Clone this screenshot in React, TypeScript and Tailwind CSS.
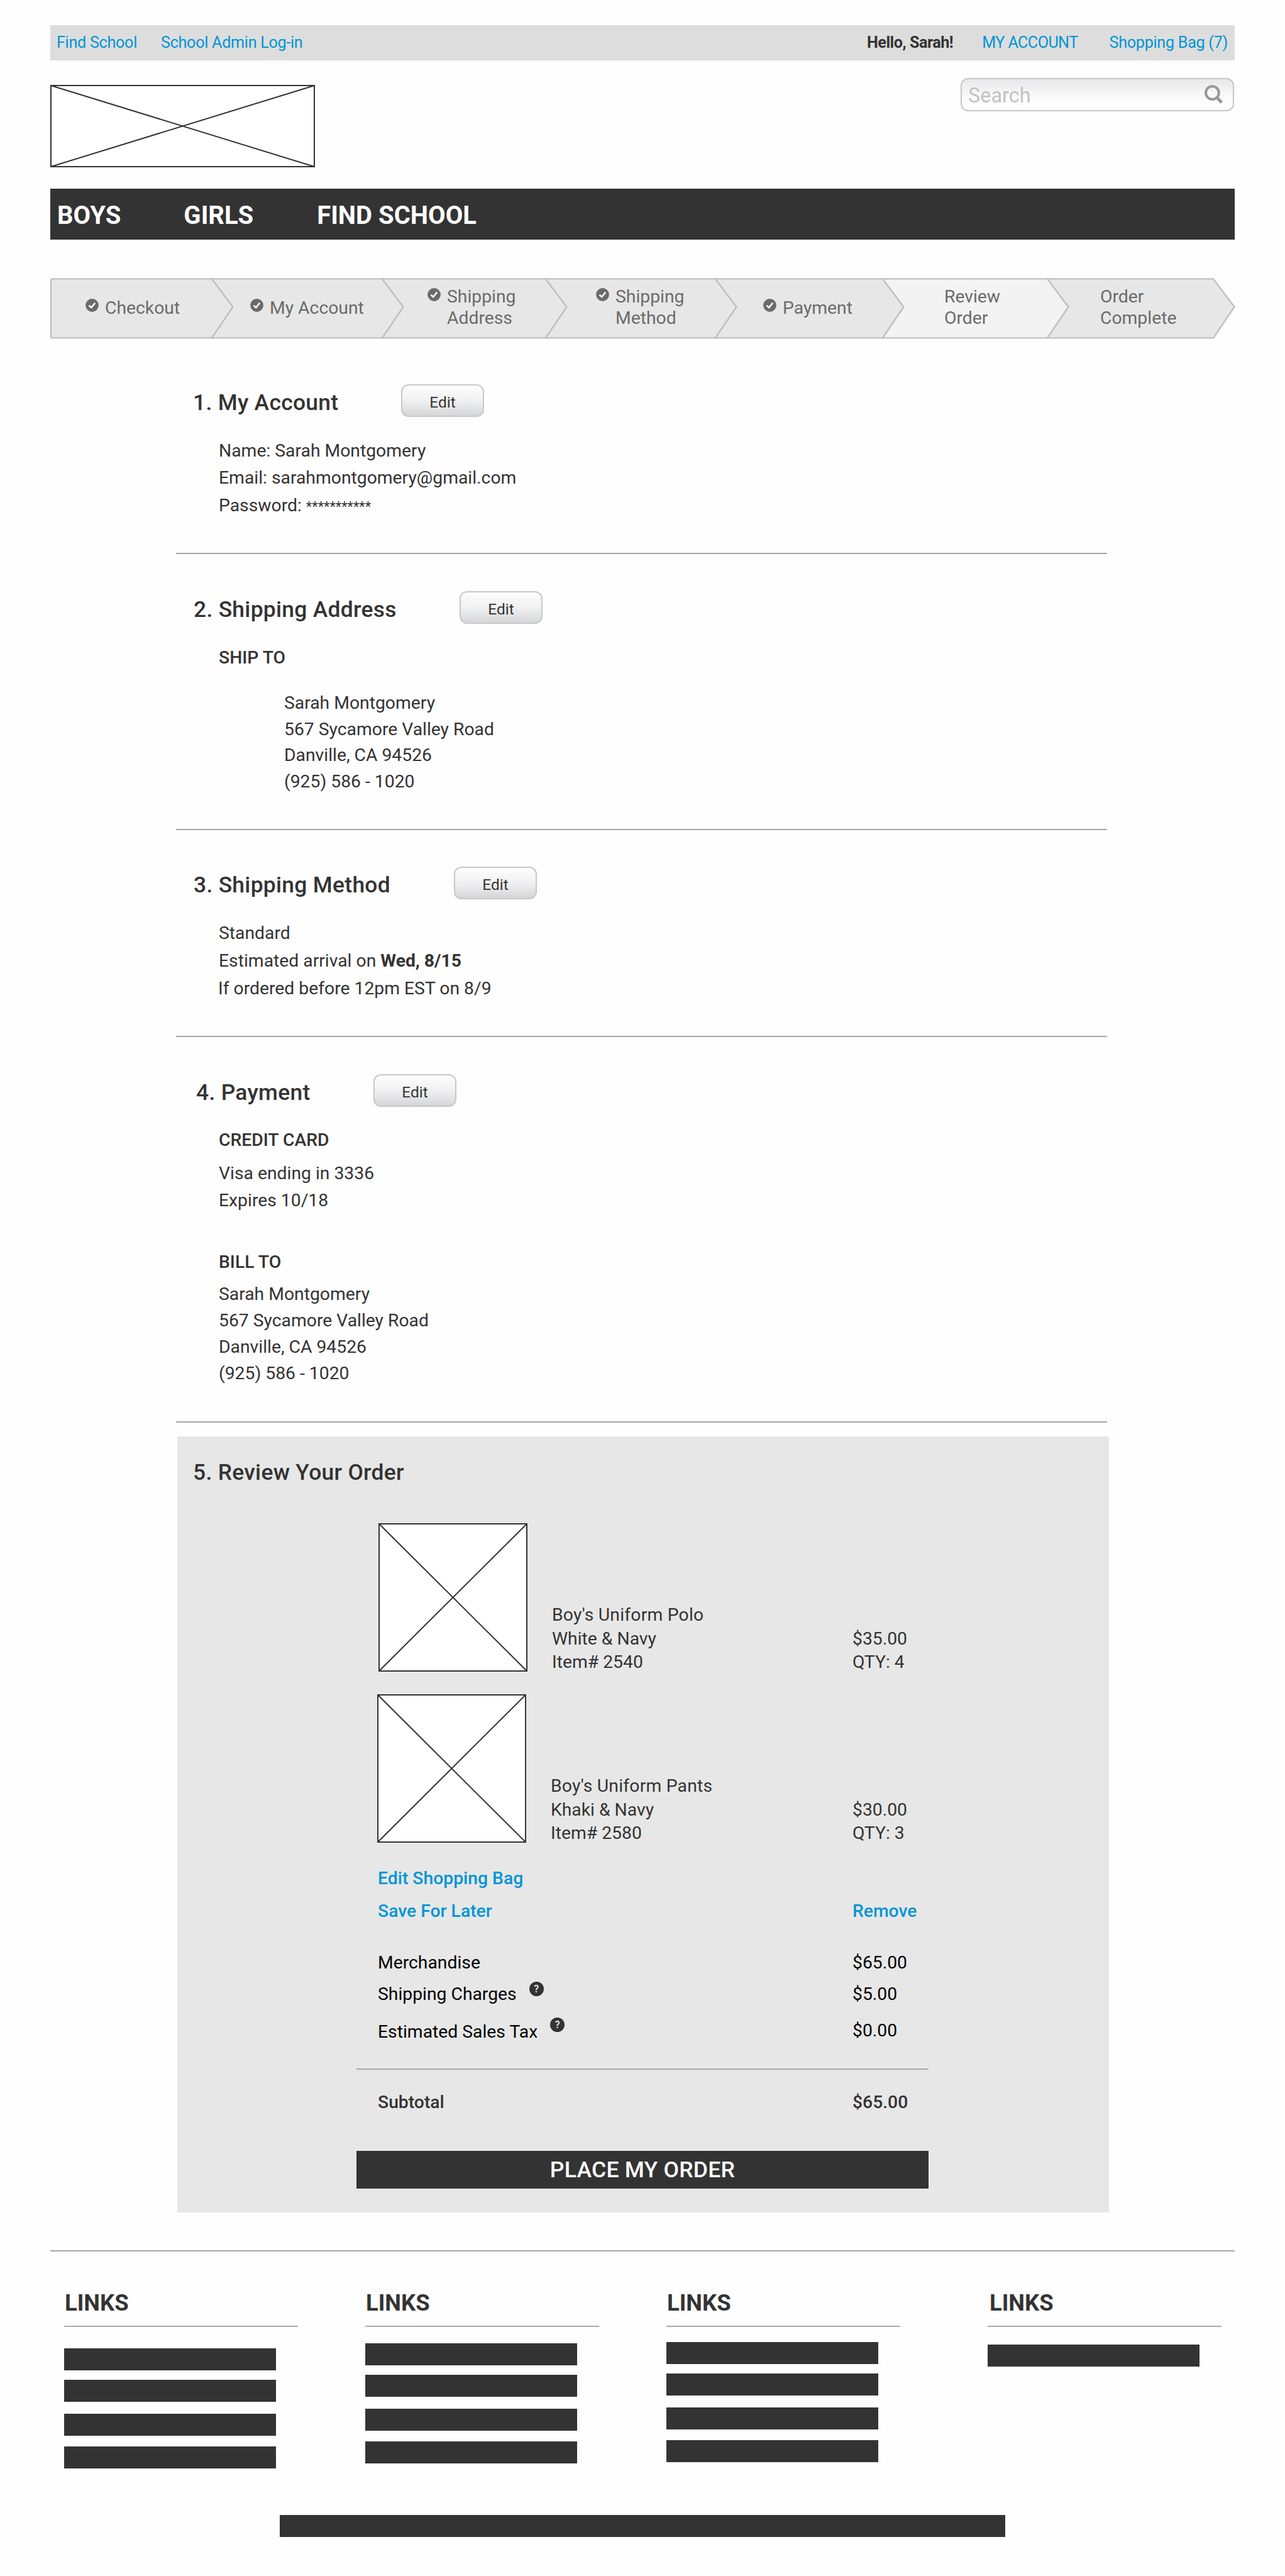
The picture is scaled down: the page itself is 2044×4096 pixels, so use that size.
import React from "react";

const ADDRESS = ["Sarah Montgomery", "567 Sycamore Valley Road", "Danville, CA 94526", "(925) 586 - 1020"];

function CrossBox({ className, w, h }: { className: string; w: number; h: number }) {
  return (
    <svg className={className} viewBox={`0 0 ${w} ${h}`} fill="none" stroke="#333333" strokeWidth="2">
      <rect x="1" y="1" width={w - 2} height={h - 2} fill="#ffffff" />
      <path d={`M1 1 L${w - 1} ${h - 1} M${w - 1} 1 L1 ${h - 1}`} />
    </svg>
  );
}

function CheckBadge({ className }: { className: string }) {
  return (
    <svg className={`h-[21px] w-[21px] shrink-0 ${className}`} viewBox="0 0 21 21">
      <circle cx="10.5" cy="10.5" r="10.4" fill="#6a6a6a" />
      <path d="M5.4 10.6 L9.2 14.2 L15.2 6.6" fill="none" stroke="#ffffff" strokeWidth="2.6" />
    </svg>
  );
}

function HelpBadge({ className }: { className: string }) {
  return (
    <span
      className={`flex h-[23px] w-[23px] shrink-0 items-center justify-center rounded-full bg-[#333333] text-[16px] leading-none font-medium text-[#f0f0f0] ${className}`}
    >
      ?
    </span>
  );
}

type StepProps = {
  w: number;
  className: string;
  lines: string[];
  checked?: boolean;
  current?: boolean;
  first?: boolean;
};

function Step({ w, className, lines, checked, current, first }: StepProps) {
  const start = first ? `M${w} 1.4 H4 Q1 1.4 1 4.4 V92.4 Q1 95.4 4 95.4` : `M${w} 1.4 H0 L33.5 46 L0 95.4`;
  const double = lines.length > 1;
  return (
    <li className={`relative flex h-24 shrink-0 items-start gap-2.5 ${className}`}>
      <svg
        className="absolute top-0 left-0 h-24 overflow-visible"
        style={{ width: w + 36 }}
        viewBox={`0 0 ${w + 36} 96`}
      >
        <path
          d={`${start} H${w} L${w + 33.5} 46 Z`}
          fill={current ? "#f3f3f3" : "#e7e7e7"}
          stroke="#c0c0c0"
          strokeWidth="2.4"
          strokeLinejoin="round"
        />
      </svg>
      {checked && <CheckBadge className={double ? "relative mt-[3px]" : "relative mt-[2px]"} />}
      <span className="relative flex flex-col leading-[34px] whitespace-nowrap">
        {lines.map((l) => (
          <span key={l}>{l}</span>
        ))}
      </span>
    </li>
  );
}

function SectionTitle({ title, className }: { title: string; className: string }) {
  return (
    <div className="flex h-[52px] items-start">
      <h2
        className={`shrink-0 text-[35.4px] leading-[58px] font-medium tracking-[0.3px] whitespace-nowrap ${className}`}
      >
        {title}
      </h2>
      <button className="h-[52px] w-[132px] rounded-xl border-2 border-[#c8c8c8] bg-linear-to-b from-[#fefefe] via-[#f0f0f1] to-[#d5d6d8] text-[24.4px] leading-[54px]">
        Edit
      </button>
    </div>
  );
}

type ItemProps = {
  className: string;
  textClass: string;
  name: string;
  color: string;
  item: string;
  price: string;
  qty: string;
};

function Item({ className, textClass, name, color, item, price, qty }: ItemProps) {
  return (
    <div className={`flex items-end leading-[37.7px] ${className}`}>
      <CrossBox className="h-[236px] w-[237px] shrink-0" w={237} h={236} />
      <div className={`-mb-1 ml-[39px] shrink-0 ${textClass}`}>
        <p className="tracking-[0.2px]">{name}</p>
        <p>{color}</p>
        <p>{item}</p>
      </div>
      <div className="-mb-1">
        <p>{price}</p>
        <p>{qty}</p>
      </div>
    </div>
  );
}

function LinkColumn({ className, titleClass, bars }: { className: string; titleClass: string; bars: string[] }) {
  return (
    <div className={`w-[372px] shrink-0 ${className}`}>
      <h3 className={`text-[36.4px] leading-10 font-bold ${titleClass}`}>LINKS</h3>
      <div className="mt-4 h-0.5 bg-[#ababab]" />
      {bars.map((b, i) => (
        <div key={i} className={`h-[35px] w-[337px] bg-[#333333] ${b}`} />
      ))}
    </div>
  );
}

export default function App() {
  return (
    <div className="h-[4096px] w-[2044px] overflow-hidden bg-[#fefefe] px-20 pt-10 font-['Roboto',sans-serif] text-[28.3px] text-[#333333]">
      <div className="flex h-14 w-[1884px] items-center bg-[#dddddd] pr-[11px] pl-2.5 text-[25.2px] tracking-[-0.3px] text-[#0095d6]">
        <a>Find School</a>
        <a className="ml-[38px]">School Admin Log-in</a>
        <span className="ml-auto font-bold tracking-[-0.5px] text-[#333333]">Hello, Sarah!</span>
        <a className="ml-[46px] tracking-[-0.6px]">MY ACCOUNT</a>
        <a className="ml-[50px]">Shopping Bag (7)</a>
      </div>

      <header className="flex h-[204px] w-[1884px] items-start justify-between">
        <CrossBox className="mt-[39px] h-[131px] w-[421px]" w={421} h={131} />
        <div className="mt-7 mr-px flex h-[53px] w-[435px] items-start justify-between rounded-xl border-2 border-[#c6c6c6] bg-linear-to-b from-[#e8e8ea] via-[#fbfbfb] via-60% to-white pr-[15px] pl-2.5">
          <span className="text-[32.4px] leading-[52px] text-[#c2c2c2]">Search</span>
          <svg className="mt-[9px] h-[30px] w-[30px]" viewBox="0 0 30 30" fill="none" stroke="#979797">
            <circle cx="12.4" cy="12.6" r="10.4" strokeWidth="4" />
            <path d="M19.5 20 L27.3 28" strokeWidth="5" />
          </svg>
        </div>
      </header>

      <nav className="flex h-[81px] w-[1884px] items-start bg-[#333333] pl-[11px] text-[40px] leading-[86px] font-bold text-white">
        <a>BOYS</a>
        <a className="ml-[100px]">GIRLS</a>
        <a className="ml-[101px]">FIND SCHOOL</a>
      </nav>

      <ol className="mt-[61px] flex h-24 text-[#6b6b6b]">
        <Step first checked w={257} className="w-[257px] pt-[31px] pl-14" lines={["Checkout"]} />
        <Step checked w={271} className="w-[271px] pt-[31px] pl-[61px]" lines={["My Account"]} />
        <Step checked w={260} className="w-[260px] pt-[13px] pl-[72px]" lines={["Shipping", "Address"]} />
        <Step checked w={270} className="w-[270px] pt-[13px] pl-20" lines={["Shipping", "Method"]} />
        <Step checked w={266} className="w-[266px] pt-[31px] pl-[76px]" lines={["Payment"]} />
        <Step current w={262} className="w-[262px] pt-[13px] pl-[98px]" lines={["Review", "Order"]} />
        <Step w={264} className="w-[264px] pt-[13px] pl-[84px]" lines={["Order", "Complete"]} />
      </ol>

      <main className="ml-[200px] w-[1481px]">
        <section className="h-[343px] border-b-2 border-[#a6a6a6] pt-[73px]">
          <SectionTitle title="1. My Account" className="w-[358px] pl-[27px]" />
          <div className="mt-8 pl-[68px] leading-[43.4px]">
            <p>Name: Sarah Montgomery</p>
            <p>Email: sarahmontgomery@gmail.com</p>
            <p>
              Password: <span className="text-[21.8px]">***********</span>
            </p>
          </div>
        </section>

        <section className="h-[439px] border-b-2 border-[#a6a6a6] pt-[59px]">
          <SectionTitle title="2. Shipping Address" className="w-[451px] pl-7" />
          <div className="mt-[37px] pl-[68px]">
            <h3 className="leading-[34px] font-medium">SHIP TO</h3>
            <div className="mt-[34px] pl-[104px] leading-[41.5px]">
              {ADDRESS.map((l) => (
                <p key={l}>{l}</p>
              ))}
            </div>
          </div>
        </section>

        <section className="h-[329px] border-b-2 border-[#a6a6a6] pt-[58px]">
          <SectionTitle title="3. Shipping Method" className="w-[442px] pl-7" />
          <div className="mt-8 pl-[68px] leading-[43.9px]">
            <p>Standard</p>
            <p>
              Estimated arrival on <b className="font-bold">Wed, 8/15</b>
            </p>
            <p className="-ml-px">If ordered before 12pm EST on 8/9</p>
          </div>
        </section>

        <section className="h-[613px] border-b-2 border-[#a6a6a6] pt-[59px]">
          <SectionTitle title="4. Payment" className="w-[314px] pl-8" />
          <div className="mt-9 pl-[68px]">
            <h3 className="leading-[34px] font-medium">CREDIT CARD</h3>
            <div className="mt-3.5 leading-[43px]">
              <p>Visa ending in 3336</p>
              <p>Expires 10/18</p>
            </div>
            <h3 className="mt-[60px] leading-[34px] font-medium">BILL TO</h3>
            <div className="mt-[13px] leading-[41.9px]">
              {ADDRESS.map((l) => (
                <p key={l}>{l}</p>
              ))}
            </div>
          </div>
        </section>

        <section className="mt-[22px] ml-0.5 h-[1234px] w-[1482px] bg-[#e7e7e7] pt-7">
          <h2 className="pl-[25px] text-[35.4px] leading-[58px] font-medium tracking-[0.3px]">5. Review Your Order</h2>
          <Item
            className="mt-[52px] ml-[320px]"
            textClass="w-[478px]"
            name="Boy's Uniform Polo"
            color="White & Navy"
            item="Item# 2540"
            price="$35.00"
            qty="QTY: 4"
          />
          <Item
            className="mt-9 ml-[318px]"
            textClass="w-[480px]"
            name="Boy's Uniform Pants"
            color="Khaki & Navy"
            item="Item# 2580"
            price="$30.00"
            qty="QTY: 3"
          />

          <div className="ml-[319px] w-[878px] leading-[34px]">
            <div className="mt-10 font-medium text-[#0095d6]">
              <a className="block">Edit Shopping Bag</a>
              <div className="mt-[18px] flex">
                <a className="w-[755px]">Save For Later</a>
                <a>Remove</a>
              </div>
            </div>
            <div className="mt-12 text-black">
              <div className="flex">
                <span className="w-[755px]">Merchandise</span>
                <span>$65.00</span>
              </div>
              <div className="mt-4 flex">
                <span className="flex w-[755px] items-start gap-5">
                  Shipping Charges
                  <HelpBadge className="-mt-[3px]" />
                </span>
                <span>$5.00</span>
              </div>
              <div className="mt-[26px] flex">
                <span className="flex w-[755px] items-start gap-5">
                  Estimated Sales Tax
                  <HelpBadge className="-mt-1.5" />
                </span>
                <span className="-mt-0.5">$0.00</span>
              </div>
            </div>
          </div>

          <div className="mt-[41px] ml-[285px] w-[910px]">
            <div className="h-0.5 bg-[#a6a6a6]" />
            <div className="mt-[35px] flex pl-[34px] leading-[34px] font-medium">
              <span className="w-[755px]">Subtotal</span>
              <span>$65.00</span>
            </div>
            <button className="mt-[60px] block h-[60px] w-full bg-[#333333] text-[35.6px] leading-[59px] font-medium tracking-[0.2px] text-white">
              PLACE MY ORDER
            </button>
          </div>
        </section>
      </main>

      <footer className="mt-[60px] w-[1884px]">
        <div className="h-0.5 bg-[#a6a6a6]" />
        <div className="flex h-[419px] pt-[62px]">
          <LinkColumn titleClass="pl-px" className="ml-[22px]" bars={["mt-[34px]", "mt-[15px]", "mt-[19px]", "mt-[17px]"]} />
          <LinkColumn titleClass="pl-px" className="ml-[107px]" bars={["mt-[26px]", "mt-[15px]", "mt-[19px]", "mt-[17px]"]} />
          <LinkColumn titleClass="pl-px" className="ml-[107px]" bars={["mt-[24px]", "mt-[15px]", "mt-[19px]", "mt-[17px]"]} />
          <LinkColumn titleClass="pl-[3px]" className="ml-[139px]" bars={["mt-[28px]"]} />
        </div>
        <div className="ml-[365px] h-[35px] w-[1154px] bg-[#333333]" />
      </footer>
    </div>
  );
}
